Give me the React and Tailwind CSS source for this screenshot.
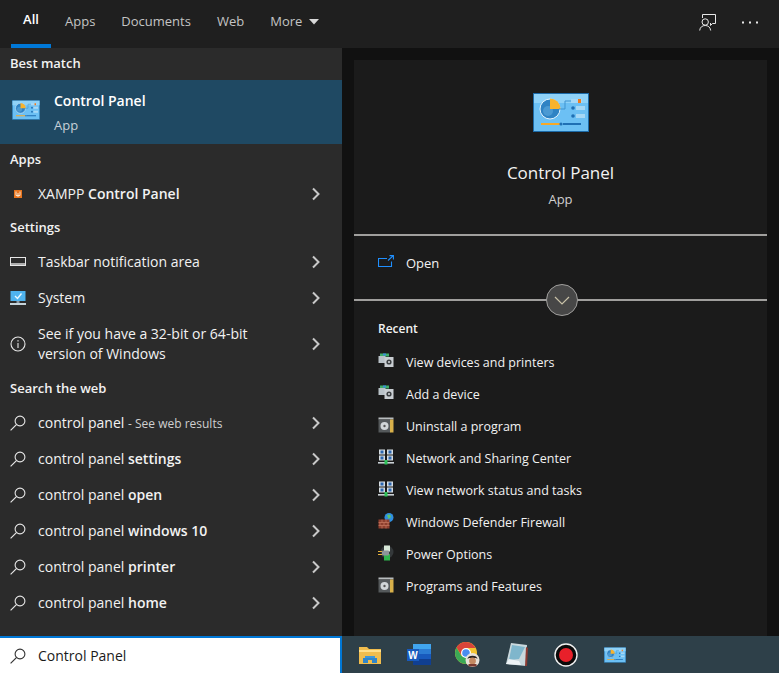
import React from 'react';

const font = { fontFamily: '"Open Sans", "Noto Sans", sans-serif' };

function Chevron() {
    return (
        <svg width="10" height="14" viewBox="0 0 10 14" className="shrink-0">
            <path d="M2 1.5 L7.5 7 L2 12.5" fill="none" stroke="#c8c8c8" strokeWidth="2" />
        </svg>
    );
}

function Search({ color = '#e6e6e6' }) {
    return (
        <svg width="16" height="16" viewBox="0 0 16 16">
            <circle cx="10" cy="6" r="4.9" fill="none" stroke={color} strokeWidth="1.1" />
            <path d="M6.4 9.6 L0.6 15.4" stroke={color} strokeWidth="1.2" />
        </svg>
    );
}

function ControlPanelIcon({ className }) {
    return (
        <svg viewBox="0 0 56 39" className={className}>
            <rect x="0.5" y="0.5" width="55" height="38" fill="#6cc0f4" stroke="#1c6aa8" />
            <rect x="1" y="1" width="54" height="9" fill="#8fd2f8" />
            <circle cx="17" cy="16" r="10" fill="#2f83c4" stroke="#e4f3fc" strokeWidth="1" />
            <circle cx="15" cy="18" r="5" fill="#4b9ad3" />
            <path d="M17 5.5 A10.5 10.5 0 0 1 27.5 16 L17 16 Z" fill="#f7b32e" />
            <rect x="38" y="6" width="11" height="4" fill="#a6d8f6" />
            <rect x="45" y="6" width="3" height="4" fill="#f07a1c" />
            <path d="M26 16 H32 V8 H38" fill="none" stroke="#3f93cf" />
            <circle cx="40" cy="15" r="1.8" fill="#1f6fb4" />
            <rect x="43" y="13" width="9" height="4" fill="#a6d8f6" />
            <circle cx="40" cy="23" r="1.8" fill="#1f6fb4" />
            <rect x="43" y="21" width="9" height="4" fill="#a6d8f6" />
            <rect x="8" y="30" width="19" height="2" fill="#f7a928" />
            <circle cx="28" cy="31" r="1.6" fill="#1f6fb4" />
            <rect x="30" y="30" width="18" height="2" fill="#1f6fb4" />
        </svg>
    );
}

function XamppIcon() {
    return (
        <svg width="16" height="16" viewBox="0 0 16 16">
            <rect x="4" y="4" width="8" height="8" fill="#e8751f" />
            <path d="M6 5.5 V9.5 H10 V5.5 M8 7 V11" fill="none" stroke="#f8e4d0" strokeWidth="1" />
        </svg>
    );
}

function TaskbarIcon() {
    return (
        <svg width="16" height="16" viewBox="0 0 16 16">
            <rect x="0.5" y="3.5" width="15" height="8" fill="none" stroke="#e6e6e6" />
            <path d="M0.5 10 H15.5" stroke="#e6e6e6" strokeWidth="1.4" />
        </svg>
    );
}

function SystemIcon() {
    return (
        <svg width="16" height="16" viewBox="0 0 16 16">
            <rect x="0.5" y="1" width="15" height="10" fill="#4fb3ee" />
            <path d="M5 6 L7.5 8.5 L11.5 3.5" fill="none" stroke="#e8f8ff" strokeWidth="1.4" />
            <rect x="6.5" y="11" width="3" height="2" fill="#8a9aa5" />
            <rect x="0" y="13" width="16" height="2" fill="#c6d3da" />
        </svg>
    );
}

function InfoIcon() {
    return (
        <svg width="16" height="16" viewBox="0 0 16 16">
            <circle cx="8" cy="8" r="7" fill="none" stroke="#e6e6e6" strokeWidth="1.1" />
            <path d="M8 7 V12" stroke="#e6e6e6" strokeWidth="1.1" />
            <rect x="7.4" y="4.2" width="1.2" height="1.3" fill="#e6e6e6" />
        </svg>
    );
}

function DeviceIcon() {
    return (
        <svg width="16" height="16" viewBox="0 0 16 16">
            <rect x="2" y="0.5" width="9" height="3" fill="#3fae6a" />
            <rect x="5" y="0.5" width="3" height="2" fill="#3d8fd8" />
            <rect x="0.5" y="3" width="7" height="7" fill="#b9c2c8" />
            <rect x="6.5" y="4" width="9" height="10" fill="#c9ced2" />
            <circle cx="11" cy="9" r="2.6" fill="#3b3f42" />
            <circle cx="11" cy="9" r="1" fill="#d8dcdf" />
        </svg>
    );
}

function ProgramIcon() {
    return (
        <svg width="16" height="16" viewBox="0 0 16 16">
            <rect x="0.5" y="0.5" width="15" height="2" fill="#b8bcbe" />
            <rect x="0.5" y="2.5" width="12" height="13" fill="#55595b" />
            <rect x="12" y="2.5" width="3.5" height="13" fill="#d8b04a" />
            <circle cx="6.5" cy="9" r="4" fill="#d2d6d8" />
            <circle cx="6.5" cy="9" r="1.2" fill="#555" />
        </svg>
    );
}

function NetworkIcon() {
    return (
        <svg width="16" height="16" viewBox="0 0 16 16">
            <rect x="1" y="0.5" width="6" height="5" fill="#d6dde2" />
            <rect x="2.5" y="1.5" width="3" height="3" fill="#2a66b0" />
            <rect x="9" y="0.5" width="6" height="5" fill="#d6dde2" />
            <rect x="10.5" y="1.5" width="3" height="3" fill="#2a66b0" />
            <rect x="1" y="6.5" width="6" height="5" fill="#d6dde2" />
            <rect x="2.5" y="7.5" width="3" height="3" fill="#2a66b0" />
            <rect x="9" y="6.5" width="6" height="5" fill="#d6dde2" />
            <rect x="10.5" y="7.5" width="3" height="3" fill="#2a66b0" />
            <rect x="0" y="13" width="16" height="1.6" fill="#c9d0d4" />
            <rect x="6.5" y="11" width="3" height="4.5" fill="#2fc45a" />
        </svg>
    );
}

function FirewallIcon() {
    return (
        <svg width="16" height="16" viewBox="0 0 16 16">
            <circle cx="11" cy="4.5" r="4.5" fill="#2f8fe0" />
            <path d="M9 2 L12 1.5 L13 4 L10.5 6 Z" fill="#5ec46a" />
            <rect x="0.5" y="6.5" width="11" height="9" fill="#8e3f2e" />
            <path d="M0.5 9.5 H11.5 M0.5 12.5 H11.5 M4 6.5 V9.5 M8 6.5 V9.5 M2 9.5 V12.5 M6 9.5 V12.5 M10 9.5 V12.5 M4 12.5 V15.5 M8 12.5 V15.5" stroke="#c87a62" strokeWidth="0.7" />
        </svg>
    );
}

function PowerIcon() {
    return (
        <svg width="16" height="16" viewBox="0 0 16 16">
            <circle cx="9" cy="7" r="6.5" fill="#34383a" />
            <rect x="6" y="0.5" width="6" height="6" fill="#d8e8d8" />
            <rect x="6" y="9" width="6" height="6.5" fill="#2fb54e" />
            <rect x="4" y="5.5" width="7" height="5" rx="1" fill="#8d9599" />
            <path d="M0 6.5 H4 M0 9.5 H4" stroke="#e8b33a" strokeWidth="1" />
        </svg>
    );
}

function OpenIcon() {
    return (
        <svg width="16" height="14" viewBox="0 0 16 14">
            <path d="M9 3.5 H0.5 V11.5 H13.5 V6.5" fill="none" stroke="#1f8fff" strokeWidth="1.1" />
            <path d="M10 5.5 L15 0.8 M11.5 0.6 H15.4 V4.5" fill="none" stroke="#1f8fff" strokeWidth="1.1" />
        </svg>
    );
}

function FeedbackIcon() {
    return (
        <svg width="17" height="17" viewBox="0 0 17 17">
            <path d="M3.5 4 V0.5 H16.5 V9.5 H13.5 L11.5 11.5 V9" fill="none" stroke="#e8e8e8" strokeWidth="1" />
            <circle cx="6.2" cy="8" r="3.2" fill="#1f1f1f" stroke="#e8e8e8" strokeWidth="1" />
            <path d="M0.7 16.5 C1 13 3.5 11.5 6.2 11.5 C9 11.5 11.2 13 11.7 16.5" fill="none" stroke="#e8e8e8" strokeWidth="1" />
        </svg>
    );
}

function Folder() {
    return (
        <svg width="22" height="18" viewBox="0 0 22 18">
            <path d="M0 1 H8 L10 3 H22 V18 H0 Z" fill="#f0bd4e" />
            <rect x="0" y="4" width="22" height="2" fill="#ffdf8a" />
            <rect x="6" y="10" width="10" height="2" fill="#3f97d8" />
            <rect x="4" y="12" width="14" height="5" fill="#2f86cc" />
            <rect x="9" y="14" width="4" height="3" fill="#f0bd4e" />
        </svg>
    );
}

function Word() {
    return (
        <svg width="24" height="21" viewBox="0 0 24 21">
            <rect x="6" y="0" width="18" height="5" fill="#41a5ee" />
            <rect x="6" y="5" width="18" height="5" fill="#2b7cd3" />
            <rect x="6" y="10" width="18" height="5" fill="#185abd" />
            <rect x="6" y="15" width="18" height="6" fill="#103f91" />
            <rect x="0" y="5" width="12" height="12" fill="#185abd" />
            <text x="6" y="15" textAnchor="middle" fontSize="10" fontWeight="700" fill="#fff" fontFamily="Liberation Sans, sans-serif">W</text>
        </svg>
    );
}

function Chrome() {
    return (
        <svg width="26" height="26" viewBox="0 0 26 26">
            <circle cx="11" cy="11" r="11" fill="#f4c531" />
            <path d="M11 0 A11 11 0 0 0 1.5 5.5 L6.5 13.5 L11 6 H20.5 A11 11 0 0 0 11 0 Z" fill="#d9443a" />
            <path d="M1.5 5.5 A11 11 0 0 0 11 22 L15.5 14 H6.5 Z" fill="#3ba956" />
            <circle cx="11" cy="11" r="5" fill="#fff" />
            <circle cx="11" cy="11" r="3.8" fill="#4a8df0" />
            <circle cx="17.5" cy="18" r="7" fill="#e8e2da" />
            <path d="M12.5 17 C12.5 12.5 22.5 12.5 22.5 17 L21 16 H14 Z" fill="#2a2320" />
            <circle cx="17.5" cy="19" r="3.4" fill="#c58a62" />
            <rect x="13.5" y="22" width="8" height="2.5" fill="#7a3a30" />
        </svg>
    );
}

function Notepad() {
    return (
        <svg width="24" height="26" viewBox="0 0 24 26">
            <path d="M6 1 L22 3 L21 24 L1 22 Z" fill="#c9d8dd" />
            <path d="M7 3 L20 5 L14 17 L4 18 Z" fill="#7fb6cc" />
            <path d="M21 5 L23 6 L22 24 L20 24 Z" fill="#8c3b32" />
            <path d="M1 22 L4 17 L14 19 L16 23 Z" fill="#eef3f5" />
        </svg>
    );
}

function Record() {
    return (
        <svg width="24" height="24" viewBox="0 0 24 24">
            <circle cx="12" cy="12" r="11" fill="#0a0a0a" stroke="#f0f0f0" strokeWidth="1.4" />
            <circle cx="12" cy="12" r="7" fill="#e8202a" />
        </svg>
    );
}

function Heading({ children, tall }) {
    return (
        <div className={`${tall ? 'h-[33px]' : 'h-8'} flex items-center pl-[10px] text-[13px] font-semibold text-[#f2f2f2]`}>
            {children}
        </div>
    );
}

function Row({ icon, children, className = 'h-9' }) {
    return (
        <div className={`${className} flex items-center pl-[10px] pr-[21px] text-[14px] text-[#f2f2f2]`}>
            <div className="w-7 shrink-0 flex items-center">{icon}</div>
            <div className="flex-1 leading-[20px]">{children}</div>
            <Chevron />
        </div>
    );
}

const webRows = ['settings', 'open', 'windows 10', 'printer', 'home'];

const recent = [
    { name: 'View devices and printers', icon: <DeviceIcon /> },
    { name: 'Add a device', icon: <DeviceIcon /> },
    { name: 'Uninstall a program', icon: <ProgramIcon /> },
    { name: 'Network and Sharing Center', icon: <NetworkIcon /> },
    { name: 'View network status and tasks', icon: <NetworkIcon /> },
    { name: 'Windows Defender Firewall', icon: <FirewallIcon /> },
    { name: 'Power Options', icon: <PowerIcon /> },
    { name: 'Programs and Features', icon: <ProgramIcon /> },
];

const taskbar = [
    { id: 1, icon: <Folder /> },
    { id: 2, icon: <Word /> },
    { id: 3, icon: <Chrome /> },
    { id: 4, icon: <Notepad /> },
    { id: 5, icon: <Record /> },
    { id: 6, icon: <ControlPanelIcon className="w-[22px] h-[16px]" /> },
];

export default function App() {
    return (
        <div style={font} className="w-[779px] h-[673px] overflow-hidden flex flex-col bg-[#111111]">
            {/* tabs */}
            <div className="h-12 shrink-0 bg-[#1f1f1f] flex text-[13px] text-[#c4c4c4]">
                <div className="ml-[11px] w-10 h-12 flex items-center justify-center pb-1 border-b-4 border-[#0078d7] font-semibold text-white">All</div>
                <div className="flex items-center pb-1 ml-[14px] gap-[26px]">
                    <span>Apps</span>
                    <span>Documents</span>
                    <span>Web</span>
                    <span className="flex items-center gap-[7px]">
                        More
                        <svg width="10" height="6" viewBox="0 0 10 6"><path d="M0 0 H10 L5 5.5 Z" fill="#d8d8d8" /></svg>
                    </span>
                </div>
                <div className="ml-auto flex items-center pb-1 pr-[21px] gap-[26px]">
                    <FeedbackIcon />
                    <svg width="16" height="3" viewBox="0 0 16 3">
                        <rect x="0" y="0.5" width="2" height="2" fill="#e8e8e8" />
                        <rect x="7" y="0.5" width="2" height="2" fill="#e8e8e8" />
                        <rect x="14" y="0.5" width="2" height="2" fill="#e8e8e8" />
                    </svg>
                </div>
            </div>

            <div className="flex h-[588px]">
                {/* results */}
                <div className="w-[342px] shrink-0 bg-[#2b2b2b]">
                    <Heading>Best match</Heading>
                    <div className="h-16 bg-[#1f4963] flex items-center pl-3 text-white">
                        <ControlPanelIcon className="w-[28px] h-[20px] mr-[14px] -mt-1" />
                        <div>
                            <div className="text-[14px] font-semibold leading-[20px]">Control Panel</div>
                            <div className="text-[13px] text-[#c6d0d8] leading-[18px] mt-[5px]">App</div>
                        </div>
                    </div>
                    <Heading>Apps</Heading>
                    <Row icon={<XamppIcon />}>XAMPP <b className="font-semibold">Control Panel</b></Row>
                    <Heading>Settings</Heading>
                    <Row icon={<TaskbarIcon />}>Taskbar notification area</Row>
                    <Row icon={<SystemIcon />}>System</Row>
                    <Row icon={<InfoIcon />} className="h-14">See if you have a 32-bit or 64-bit<br />version of Windows</Row>
                    <Heading tall>Search the web</Heading>
                    <Row icon={<Search />}>control panel <span className="text-[12px] text-[#cfcfcf]">- See web results</span></Row>
                    {webRows.map(item => (
                        <Row key={item} icon={<Search />}>control panel <b className="font-semibold">{item}</b></Row>
                    ))}
                </div>

                {/* preview */}
                <div className="flex-1 pt-3 px-3">
                    <div className="h-full bg-[#1b1b1b] text-[#f2f2f2]">
                        <div className="h-[176px] flex flex-col items-center pt-[33px] border-b-2 border-[#a09f9d]">
                            <ControlPanelIcon className="w-14 h-[39px]" />
                            <div className="text-[17px] leading-6 mt-[29px]">Control Panel</div>
                            <div className="text-[13px] text-[#d0d0d0] leading-[18px] mt-[5px]">App</div>
                        </div>
                        <div className="h-[63px] flex items-center pl-6 pb-[7px] text-[13px]">
                            <div className="w-7 -mt-1"><OpenIcon /></div>
                            Open
                        </div>
                        <div className="relative h-[2px] bg-[#a09f9d]">
                            <div className="absolute left-[192px] -top-[15px] w-8 h-8 rounded-full bg-[#474747] border border-[#a09f9d] flex items-center justify-center">
                                <svg width="16" height="9" viewBox="0 0 16 9"><path d="M1 1 L8 8 L15 1" fill="none" stroke="#c9c2a8" strokeWidth="1.2" /></svg>
                            </div>
                        </div>
                        <div className="pl-6 pt-[19px]">
                            <div className="text-[12px] font-semibold leading-[18px] mb-[9px]">Recent</div>
                            {recent.map(item => (
                                <div key={item.name} className="h-8 flex items-center text-[12.5px]">
                                    <div className="w-7 -mt-1">{item.icon}</div>
                                    {item.name}
                                </div>
                            ))}
                        </div>
                    </div>
                </div>
            </div>

            <div className="flex h-[37px]">
                {/* search box */}
                <div className="w-[342px] shrink-0 bg-white border-t-2 border-r-2 border-[#0078d7] flex items-center pl-[10px] text-[14px] text-[#1a1a1a]">
                    <div className="w-7"><Search color="#333333" /></div>
                    Control Panel
                </div>
                {/* taskbar */}
                <div className="flex-1 bg-[#2e4049] flex items-center pl-[3px]">
                    {taskbar.map(item => (
                        <div key={item.id} className="w-[49px] flex items-center justify-center">{item.icon}</div>
                    ))}
                </div>
            </div>
        </div>
    );
}
